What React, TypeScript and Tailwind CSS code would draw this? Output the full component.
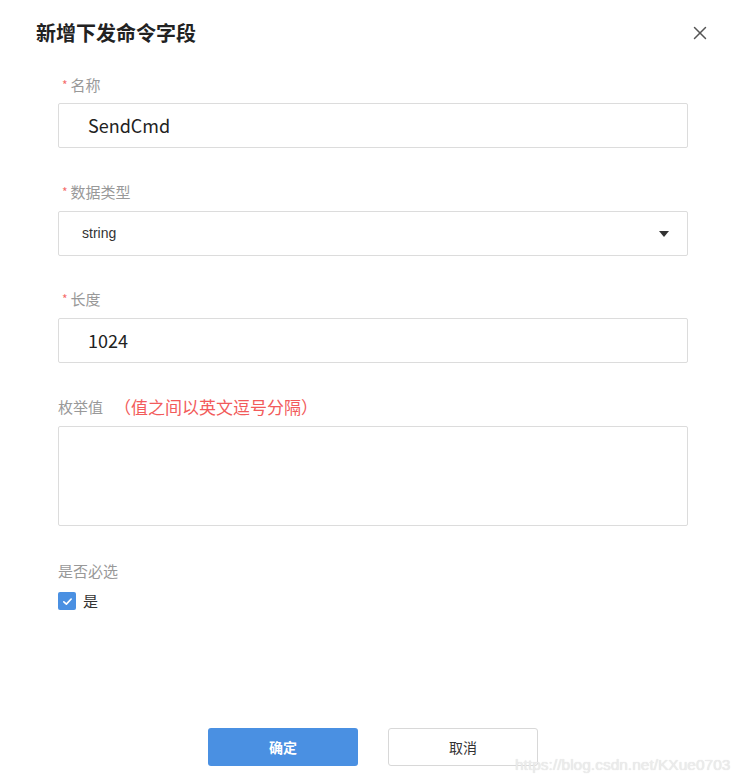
import { X } from 'lucide-react'

const font = { fontFamily: '"Noto Sans CJK SC", "Liberation Sans", sans-serif' }

function Label({ text, required }: { text: string; required?: boolean }) {
  return (
    <div className="flex items-center h-[20px] text-[15px] text-[#999]">
      {required && <span className="text-[#f56c6c] text-[12px] mr-[3px] ml-[4px] -mt-[1px]">*</span>}
      {text}
    </div>
  )
}

export default function App() {
  return (
    <div className="w-[745px] h-[781px] bg-white relative" style={font}>
      {/* Header */}
      <div className="flex items-center justify-between pl-[36px] pr-[34px] pt-[20px]">
        <h1 className="text-[20px] font-bold text-[#222] leading-[26px]">新增下发命令字段</h1>
        <X className="w-[22px] h-[22px] text-[#555]" strokeWidth={1.6} />
      </div>

      {/* Form */}
      <div className="pl-[58px] pr-[57px] pt-[29px] flex flex-col">
        <Label text="名称" required />
        <div className="mt-[8px] h-[45px] border border-[#dcdcdc] rounded-[2px] flex items-center pl-[29px] text-[18px] text-[#222]">
          SendCmd
        </div>

        <div className="mt-[34px]">
          <Label text="数据类型" required />
        </div>
        <div className="mt-[9px] h-[45px] border border-[#dcdcdc] rounded-[2px] flex items-center justify-between pl-[23px] pr-[18px] text-[14px] text-[#333]" style={{ fontFamily: '"Liberation Sans", sans-serif' }}>
          string
          <span className="w-0 h-0 border-l-[5px] border-r-[5px] border-t-[6px] border-l-transparent border-r-transparent border-t-[#333]" />
        </div>

        <div className="mt-[33px]">
          <Label text="长度" required />
        </div>
        <div className="mt-[9px] h-[45px] border border-[#dcdcdc] rounded-[2px] flex items-center pl-[29px] text-[18px] text-[#222]">
          1024
        </div>

        <div className="mt-[33px] flex items-center h-[22px]">
          <span className="text-[15px] text-[#999]">枚举值</span>
          <span className="ml-[11px] text-[17px] text-[#f25b5b]">（值之间以英文逗号分隔）</span>
        </div>
        <div className="mt-[8px] h-[100px] border border-[#dcdcdc] rounded-[2px]" />

        <div className="mt-[35px] text-[15px] text-[#999] h-[20px] leading-[20px]">是否必选</div>
        <div className="mt-[9px] flex items-center gap-[7px]">
          <span className="w-[18px] h-[18px] rounded-[2px] bg-[#4a90e2] flex items-center justify-center">
            <svg viewBox="0 0 12 12" className="w-[11px] h-[11px]">
              <path d="M2 6.3 L4.8 8.8 L10 3.3" fill="none" stroke="white" strokeWidth={1.8} strokeLinecap="round" strokeLinejoin="round" />
            </svg>
          </span>
          <span className="text-[15px] text-[#333]">是</span>
        </div>
      </div>

      {/* Footer buttons */}
      <div className="absolute left-[208px] top-[728px] flex gap-[30px]">
        <button className="w-[150px] h-[38px] rounded-[3px] bg-[#4a90e2] text-white text-[14px] font-bold">确定</button>
        <button className="w-[150px] h-[38px] rounded-[3px] border border-[#d8d8d8] bg-white text-[#333] text-[14px]">取消</button>
      </div>

      {/* watermark */}
      <div className="absolute left-[515px] top-[753px] text-[15.5px] text-[#ececec]" style={{ fontFamily: '"Liberation Sans", sans-serif', textShadow: '0 0 1px #d8d8d8' }}>
        https://blog.csdn.net/KXue0703
      </div>
    </div>
  )
}
